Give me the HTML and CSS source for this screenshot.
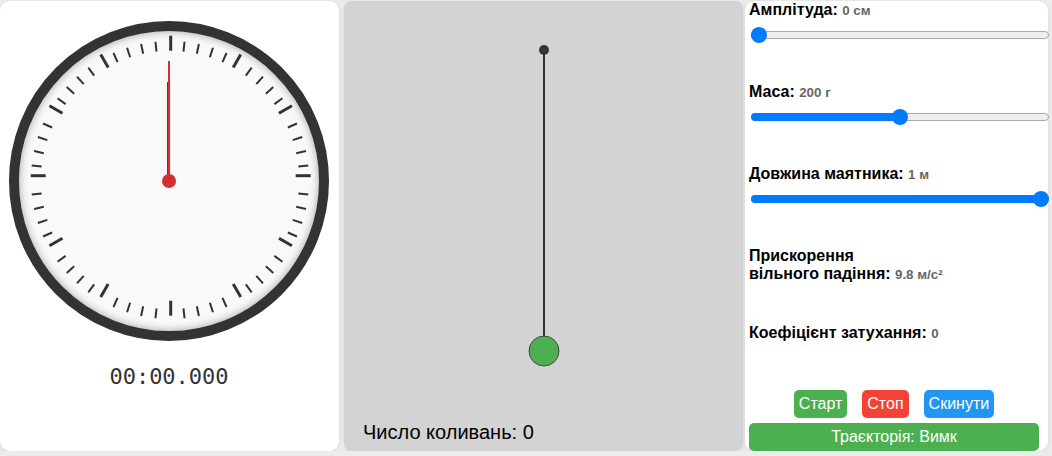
FILE: index.html
```html
<!DOCTYPE html>
<html lang="uk">
<head>
<meta charset="utf-8">
<title>Маятник</title>
<link rel="stylesheet" href="styles.css">
</head>
<body>
<div class="app">
  <section class="panel clock-panel">
    <div class="clock">
      <svg class="clock-svg" width="320" height="320" viewBox="0 0 320 320">
        <defs>
          <line id="mj" x1="0" y1="-140" x2="0" y2="-125"/>
          <line id="mn" x1="0" y1="-139" x2="0" y2="-129"/>
        </defs>
        <g class="ticks-minor" transform="translate(161 159)">
          <use href="#mn" transform="rotate(6)"/><use href="#mn" transform="rotate(12)"/><use href="#mn" transform="rotate(18)"/><use href="#mn" transform="rotate(24)"/>
          <use href="#mn" transform="rotate(36)"/><use href="#mn" transform="rotate(42)"/><use href="#mn" transform="rotate(48)"/><use href="#mn" transform="rotate(54)"/>
          <use href="#mn" transform="rotate(66)"/><use href="#mn" transform="rotate(72)"/><use href="#mn" transform="rotate(78)"/><use href="#mn" transform="rotate(84)"/>
          <use href="#mn" transform="rotate(96)"/><use href="#mn" transform="rotate(102)"/><use href="#mn" transform="rotate(108)"/><use href="#mn" transform="rotate(114)"/>
          <use href="#mn" transform="rotate(126)"/><use href="#mn" transform="rotate(132)"/><use href="#mn" transform="rotate(138)"/><use href="#mn" transform="rotate(144)"/>
          <use href="#mn" transform="rotate(156)"/><use href="#mn" transform="rotate(162)"/><use href="#mn" transform="rotate(168)"/><use href="#mn" transform="rotate(174)"/>
          <use href="#mn" transform="rotate(186)"/><use href="#mn" transform="rotate(192)"/><use href="#mn" transform="rotate(198)"/><use href="#mn" transform="rotate(204)"/>
          <use href="#mn" transform="rotate(216)"/><use href="#mn" transform="rotate(222)"/><use href="#mn" transform="rotate(228)"/><use href="#mn" transform="rotate(234)"/>
          <use href="#mn" transform="rotate(246)"/><use href="#mn" transform="rotate(252)"/><use href="#mn" transform="rotate(258)"/><use href="#mn" transform="rotate(264)"/>
          <use href="#mn" transform="rotate(276)"/><use href="#mn" transform="rotate(282)"/><use href="#mn" transform="rotate(288)"/><use href="#mn" transform="rotate(294)"/>
          <use href="#mn" transform="rotate(306)"/><use href="#mn" transform="rotate(312)"/><use href="#mn" transform="rotate(318)"/><use href="#mn" transform="rotate(324)"/>
          <use href="#mn" transform="rotate(336)"/><use href="#mn" transform="rotate(342)"/><use href="#mn" transform="rotate(348)"/><use href="#mn" transform="rotate(354)"/>
        </g>
        <g class="ticks-major" transform="translate(161.7 154.7)">
          <use href="#mj"/><use href="#mj" transform="rotate(30)"/><use href="#mj" transform="rotate(60)"/><use href="#mj" transform="rotate(90)"/>
          <use href="#mj" transform="rotate(120)"/><use href="#mj" transform="rotate(150)"/><use href="#mj" transform="rotate(180)"/><use href="#mj" transform="rotate(210)"/>
          <use href="#mj" transform="rotate(240)"/><use href="#mj" transform="rotate(270)"/><use href="#mj" transform="rotate(300)"/><use href="#mj" transform="rotate(330)"/>
        </g>
        <line class="hand-min" x1="159.6" y1="61" x2="159.6" y2="160"/>
        <line class="hand-sec" x1="160" y1="40" x2="160" y2="160"/>
        <circle class="hub" cx="160" cy="160" r="7"/>
      </svg>
    </div>
    <div class="time">00:00.000</div>
  </section>

  <section class="panel stage">
    <svg class="pendulum" width="399" height="420" viewBox="0 0 399 420">
      <line class="rod" x1="200" y1="49" x2="200" y2="350"/>
      <circle class="pivot" cx="200" cy="49" r="5"/>
      <circle class="bob" cx="200" cy="350" r="15"/>
    </svg>
    <div class="count">Число коливань: 0</div>
  </section>

  <section class="panel controls">
    <div class="group">
      <label class="lbl">Амплітуда: <span class="val">0 см</span></label>
      <div class="slider" style="--p:0">
        <div class="track"></div><div class="fill"></div><div class="thumb"></div>
      </div>
    </div>
    <div class="group">
      <label class="lbl">Маса: <span class="val">200 г</span></label>
      <div class="slider" style="--p:0.5">
        <div class="track"></div><div class="fill"></div><div class="thumb"></div>
      </div>
    </div>
    <div class="group">
      <label class="lbl">Довжина маятника: <span class="val">1 м</span></label>
      <div class="slider" style="--p:1">
        <div class="track"></div><div class="fill"></div><div class="thumb"></div>
      </div>
    </div>
    <div class="group">
      <label class="lbl">Прискорення<br>вільного падіння: <span class="val">9.8 м/с²</span></label>
    </div>
    <div class="group">
      <label class="lbl">Коефіцієнт затухання: <span class="val">0</span></label>
    </div>
    <div class="actions">
      <div class="btn-row">
        <button class="btn btn-green">Старт</button>
        <button class="btn btn-red">Стоп</button>
        <button class="btn btn-blue">Скинути</button>
      </div>
      <button class="btn btn-green btn-wide">Траєкторія: Вимк</button>
    </div>
  </section>
</div>
</body>
</html>
```

FILE: styles.css
```css
* { box-sizing: border-box; }

body {
  margin: 0;
  background: #ececec;
  font-family: "Liberation Sans", Arial, sans-serif;
  overflow: hidden;
}

.app {
  display: flex;
  align-items: flex-start;
  padding-top: 1px;
}

.panel {
  height: 450px;
  border-radius: 10px;
  box-shadow: 0 1px 4px rgba(0, 0, 0, 0.08);
}

/* ---------- clock ---------- */
.clock-panel {
  width: 339px;
  margin-right: 5px;
  background: #fff;
  padding-left: 9px;
  display: flex;
  flex-direction: column;
  align-items: flex-start;
}

.clock {
  position: relative;
  width: 320px;
  height: 320px;
  margin-top: 20px;
  border: 10px solid #333;
  border-radius: 50%;
  background: #f9f9f9;
  box-shadow: inset 0 0 9px rgba(0, 0, 0, 0.35);
}

.clock-svg {
  position: absolute;
  top: -10px;
  left: -10px;
}

.ticks-minor use { stroke: #333; stroke-width: 2; }
.ticks-major use { stroke: #333; stroke-width: 3; }

.hand-min { stroke: #333; stroke-width: 3; }
.hand-sec { stroke: #d32f2f; stroke-width: 2; }
.hub { fill: #d32f2f; }

.time {
  width: 320px;
  margin-top: 23px;
  text-align: center;
  font-family: "DejaVu Sans Mono", monospace;
  font-size: 22px;
  color: #333;
}

/* ---------- pendulum stage ---------- */
.stage {
  width: 399px;
  background: #d3d3d3;
  border-radius: 8px;
  display: flex;
  flex-direction: column;
}

.pendulum { display: block; }
.rod { stroke: #333; stroke-width: 2; }
.pivot { fill: #333; }
.bob { fill: #4caf50; stroke: #444; stroke-width: 1; }

.count {
  padding-left: 19px;
  font-size: 20px;
  line-height: 23px;
  color: #000;
}

/* ---------- controls ---------- */
.controls {
  width: 303px;
  margin-left: 2px;
  background: #fff;
  padding: 0 9px 0 4px;
  display: flex;
  flex-direction: column;
}

.group { margin-bottom: 40px; }

.lbl {
  display: block;
  font-weight: bold;
  font-size: 16px;
  line-height: 18px;
  color: #000;
}

.val {
  font-size: 13.33px;
  color: #666;
}

.slider {
  position: relative;
  width: 298px;
  height: 16px;
  margin: 7px 0 0 2px;
}

.track {
  position: absolute;
  top: 4px;
  left: 0;
  right: 0;
  height: 8px;
  border: 1px solid #aaa;
  border-radius: 5px;
  background: #efefef;
}

.fill {
  position: absolute;
  top: 4px;
  left: 0;
  height: 8px;
  width: calc(8px + var(--p) * (100% - 16px));
  border-radius: 5px;
  background: #007bff;
}

.thumb {
  position: absolute;
  top: 0;
  left: calc(var(--p) * (100% - 16px));
  width: 16px;
  height: 16px;
  border-radius: 50%;
  background: #007bff;
}

.actions {
  margin-top: auto;
  display: flex;
  flex-direction: column;
  gap: 5px;
}

.btn-row {
  display: flex;
  justify-content: center;
  gap: 15px;
}

.btn {
  border: 0;
  color: #fff;
  font-family: "Liberation Sans", Arial, sans-serif;
  font-size: 16px;
  line-height: 18px;
  padding: 5px 5px;
  border-radius: 5px;
}

.btn-green { background: #4caf50; }
.btn-red { background: #f44336; }
.btn-blue { background: #2196f3; }
.btn-wide { width: 100%; padding: 5px 4px; }
```
